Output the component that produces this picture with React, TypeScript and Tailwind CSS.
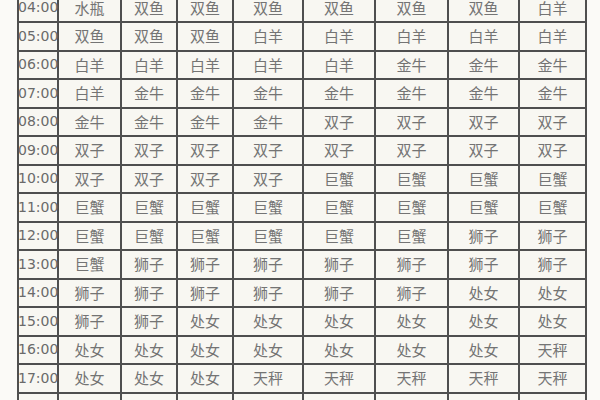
const rows: [string, string[]][] = [
  ["04:00", ["水瓶", "双鱼", "双鱼", "双鱼", "双鱼", "双鱼", "双鱼", "白羊"]],
  ["05:00", ["双鱼", "双鱼", "双鱼", "白羊", "白羊", "白羊", "白羊", "白羊"]],
  ["06:00", ["白羊", "白羊", "白羊", "白羊", "白羊", "金牛", "金牛", "金牛"]],
  ["07:00", ["白羊", "金牛", "金牛", "金牛", "金牛", "金牛", "金牛", "金牛"]],
  ["08:00", ["金牛", "金牛", "金牛", "金牛", "双子", "双子", "双子", "双子"]],
  ["09:00", ["双子", "双子", "双子", "双子", "双子", "双子", "双子", "双子"]],
  ["10:00", ["双子", "双子", "双子", "双子", "巨蟹", "巨蟹", "巨蟹", "巨蟹"]],
  ["11:00", ["巨蟹", "巨蟹", "巨蟹", "巨蟹", "巨蟹", "巨蟹", "巨蟹", "巨蟹"]],
  ["12:00", ["巨蟹", "巨蟹", "巨蟹", "巨蟹", "巨蟹", "巨蟹", "狮子", "狮子"]],
  ["13:00", ["巨蟹", "狮子", "狮子", "狮子", "狮子", "狮子", "狮子", "狮子"]],
  ["14:00", ["狮子", "狮子", "狮子", "狮子", "狮子", "狮子", "处女", "处女"]],
  ["15:00", ["狮子", "狮子", "处女", "处女", "处女", "处女", "处女", "处女"]],
  ["16:00", ["处女", "处女", "处女", "处女", "处女", "处女", "处女", "天秤"]],
  ["17:00", ["处女", "处女", "处女", "天秤", "天秤", "天秤", "天秤", "天秤"]],
  ["18:00", ["天秤", "天秤", "天秤", "天秤", "天秤", "天秤", "天秤", "天蝎"]],
];

export default function App() {
  return (
    <div className="w-[600px] h-[400px] overflow-hidden bg-[#fbfaf7]">
      <div className="ml-[17px] mt-[-5.5px] w-[570px] grid grid-cols-[38px_61px_54px_54px_68px_70px_71px_69px_65px] auto-rows-[26.5px] gap-[2px] bg-[#4f4f4f] border-x-2 border-[#4f4f4f]">
        {rows.map(([time, signs]) => (
          <div key={time} className="contents">
            <div className="bg-[#f8f7f2] flex items-center overflow-visible whitespace-nowrap text-[14px] text-[#6a6a6a] font-['DejaVu_Sans',sans-serif]">
              <span className="-ml-[1px]">{time}</span>
            </div>
            {signs.map((s, i) => (
              <div
                key={i}
                className="bg-[#f8f7f2] flex items-center justify-center text-[15px] text-[#747474] font-['Noto_Sans_CJK_SC',sans-serif]"
              >
                {s}
              </div>
            ))}
          </div>
        ))}
      </div>
    </div>
  );
}
